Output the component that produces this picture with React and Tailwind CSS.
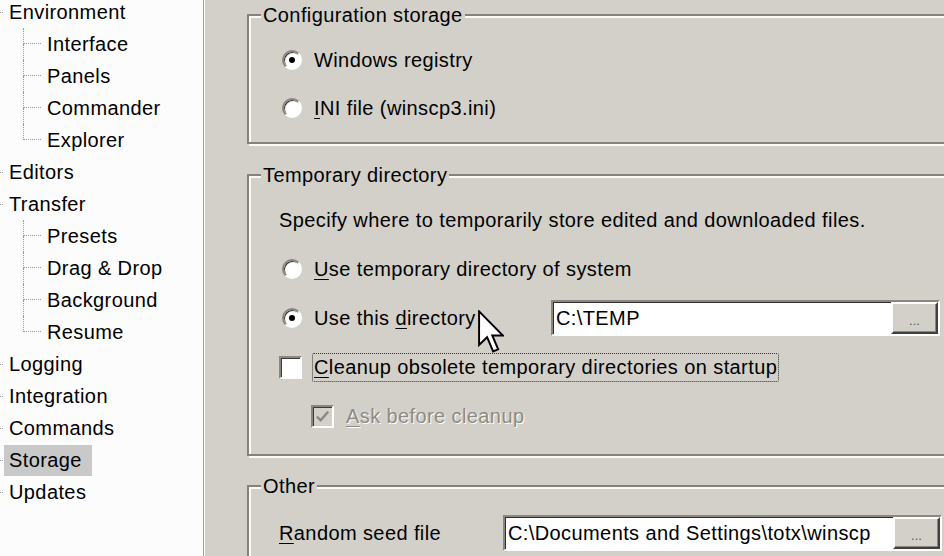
import React from 'react';

const tree = [
  { label: 'Environment', children: ['Interface', 'Panels', 'Commander', 'Explorer'] },
  { label: 'Editors' },
  { label: 'Transfer', children: ['Presets', 'Drag & Drop', 'Background', 'Resume'] },
  { label: 'Logging' },
  { label: 'Integration' },
  { label: 'Commands' },
  { label: 'Storage', selected: true },
  { label: 'Updates' },
];

function Radio({ on }) {
  return (
    <span className="w-[20px] h-[20px] shrink-0 rounded-full bg-white border-2 border-t-[#8a8781] border-l-[#8a8781] border-r-white border-b-white shadow-[inset_1px_1px_0_#3a3a3a] flex items-center justify-center">
      {on && <span className="w-[6px] h-[6px] rounded-full bg-black" />}
    </span>
  );
}

function Check({ checked, disabled }) {
  return (
    <span
      className={
        'w-[23px] h-[23px] shrink-0 border-2 border-t-[#8a8781] border-l-[#8a8781] border-r-white border-b-white shadow-[inset_1px_1px_0_#3a3a3a] flex items-center justify-center ' +
        (disabled ? 'bg-[#d3d0c9]' : 'bg-white')
      }
    >
      {checked && (
        <svg width="15" height="15" viewBox="0 0 8 8">
          <path d="M1 4 L3 6 L7 1.5" fill="none" stroke={disabled ? '#8a8781' : '#000'} strokeWidth="1.3" />
        </svg>
      )}
    </span>
  );
}

function PathBox({ value, width }) {
  return (
    <div className={'h-[36px] shrink-0 flex bg-white border-2 border-t-[#8a8781] border-l-[#8a8781] border-r-white border-b-white shadow-[inset_1px_1px_0_#2e2e2e] ' + width}>
      <div className="flex-1 min-w-0 overflow-hidden whitespace-nowrap pl-[3px] leading-[32px]">{value}</div>
      <div className="w-[47px] h-[32px] shrink-0 bg-[#d3d0c9] border-2 border-t-white border-l-white border-r-[#3f3f3f] border-b-[#3f3f3f] shadow-[inset_-1px_-1px_0_#8a8781] flex items-end justify-center pb-[5px] text-[13px] leading-[13px] tracking-normal text-[#555]">
        ...
      </div>
    </div>
  );
}

function U({ children }) {
  return <span className="underline decoration-1 underline-offset-[3px]">{children}</span>;
}

function Group({ title, children, className }) {
  return (
    <fieldset className={'w-[720px] shrink-0 border-2 border-[#85827c] shadow-[inset_2px_2px_0_#fbfaf7,2px_2px_0_#fbfaf7] ' + (className || '')}>
      <legend className="ml-[12px] px-[2px] bg-[#d3d0c9]">{title}</legend>
      {children}
    </fieldset>
  );
}

function Tree() {
  return (
    <div className="w-[204px] shrink-0 h-full bg-[#fcfcfc] border-r border-r-[#a3a09a] shadow-[1px_0_0_#fff] z-10">
      <div className="-mt-[4px] flex flex-col">
        {tree.map((node) => (
          <React.Fragment key={node.label}>
            <div className="h-[32px] flex items-center">
              <span className="w-[3px] h-0 border-t border-dotted border-[#9a9a9a]" />
              <span className={'ml-[1px] h-[31px] flex items-center pl-[5px] pr-[10px] ' + (node.selected ? 'bg-[#c9c9c9]' : '')}>
                {node.label}
              </span>
            </div>
            {node.children &&
              node.children.map((c, i) => {
                const last = i === node.children.length - 1;
                return (
                  <div key={c} className="h-[32px] flex items-center pl-[23px]">
                    <span className="w-[18px] h-full flex flex-col">
                      <span className="h-1/2 border-l border-b border-dotted border-[#9a9a9a]" />
                      <span className={'h-1/2 ' + (last ? '' : 'border-l border-dotted border-[#9a9a9a]')} />
                    </span>
                    <span className="ml-[6px]">{c}</span>
                  </div>
                );
              })}
          </React.Fragment>
        ))}
      </div>
    </div>
  );
}

function Cursor() {
  return (
    <svg className="absolute left-[478px] top-[310px]" width="26" height="44" viewBox="0 0 12 20">
      <path d="M0.5 0.5 L0.5 16 L4.2 12.4 L7 19 L9.3 18 L6.6 11.6 L11.5 11.6 Z" fill="#fff" stroke="#000" strokeWidth="0.9" strokeLinejoin="miter" />
    </svg>
  );
}

export default function App() {
  return (
    <div className="relative w-[944px] h-[556px] overflow-hidden flex bg-[#d3d0c9] text-[20px] leading-[24px] tracking-[0.4px] text-black font-['Liberation_Sans',Arial,sans-serif]">
      <Tree />
      <div className="flex-1 min-w-0 pl-[43px] pt-[3px] flex flex-col">
        <Group title="Configuration storage">
          <div className="flex flex-col gap-[24px] pt-[21px] pb-[22px] pl-[30px]">
            <div className="h-[24px] flex items-center">
              <span className="ml-[3px]"><Radio on /></span>
              <span className="ml-[12px]">Windows registry</span>
            </div>
            <div className="h-[24px] flex items-center">
              <span className="ml-[3px]"><Radio /></span>
              <span className="ml-[12px]"><U>I</U>NI file (winscp3.ini)</span>
            </div>
          </div>
        </Group>

        <Group title="Temporary directory" className="mt-[19px]">
          <div className="flex flex-col gap-[25px] pt-[21px] pb-[26px] pl-[30px]">
            <div className="h-[24px] flex items-center">Specify where to temporarily store edited and downloaded files.</div>
            <div className="h-[24px] flex items-center">
              <span className="ml-[3px]"><Radio /></span>
              <span className="ml-[12px]"><U>U</U>se temporary directory of system</span>
            </div>
            <div className="h-[24px] flex items-center">
              <div className="w-[272px] shrink-0 flex items-center">
                <span className="ml-[3px]"><Radio on /></span>
                <span className="ml-[12px]">Use this <U>d</U>irectory</span>
              </div>
              <PathBox value={'C:\\TEMP'} width="w-[389px]" />
            </div>
            <div className="h-[24px] flex items-center">
              <Check />
              <span className="ml-[10px] px-[1px] h-[29px] flex items-center border border-dotted border-[#333] rounded-[2px]">
                <U>C</U>leanup obsolete temporary directories on startup
              </span>
            </div>
            <div className="h-[24px] flex items-center pl-[32px]">
              <Check checked disabled />
              <span className="ml-[12px] text-[#8d8a84] [text-shadow:1px_1px_0_#fff]"><U>A</U>sk before cleanup</span>
            </div>
          </div>
        </Group>

        <Group title="Other" className="mt-[18px]">
          <div className="flex flex-col pt-[23px] pb-[20px] pl-[30px]">
            <div className="h-[24px] flex items-center">
              <div className="w-[224px] shrink-0"><U>R</U>andom seed file</div>
              <PathBox value={'C:\\Documents and Settings\\totx\\winscp'} width="w-[439px]" />
            </div>
          </div>
        </Group>
      </div>
      <Cursor />
    </div>
  );
}
